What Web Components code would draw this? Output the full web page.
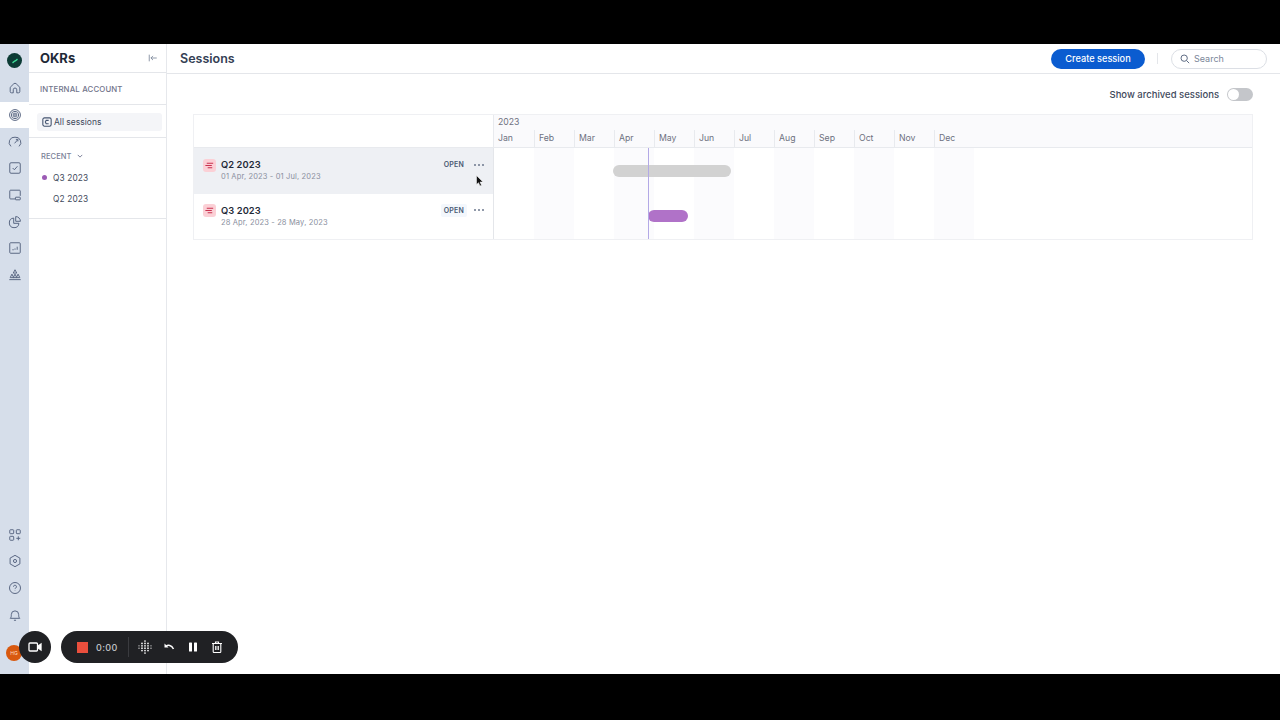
<!DOCTYPE html>
<html>
<head>
<meta charset="utf-8">
<title>OKRs</title>
<style>
html, body { margin: 0; height: 100%; background: #000; overflow: hidden; }
body { font-family: Inter, "Liberation Sans", sans-serif; color: #172b4d; }
okr-app { margin-top: 44px; }
</style>
</head>
<body>
<okr-app></okr-app>
<script>
const ICONS = {
    home: '<path d="M2.500 7.200 6.600 3.200a2 2 0 0 1 2.800 0l4.100 4V12a1.500 1.500 0 0 1-1.500 1.500H10V10a2 2 0 0 0-4 0v3.500H4A1.500 1.500 0 0 1 2.500 12z"/>',
    target: '<circle cx="8" cy="8" r="6.200"/><circle cx="8" cy="8" r="4.200"/><circle cx="8" cy="8" r="2.200"/><circle cx="8" cy="8" r=".6"/>',
    gauge: '<path d="M3.400 13A6 6 0 0 1 8 2.500a6 6 0 0 1 4.600 10.500"/><path d="M7.500 9.500 11 5.500"/><path d="M9 5h2.300v2.300"/>',
    check: '<rect x="2" y="2" width="12" height="12" rx="1.500"/><path d="m5.300 8 2 2 3.500-4"/>',
    screen: '<path d="M14 9V3.500a1 1 0 0 0-1-1H3a1 1 0 0 0-1 1v8a1 1 0 0 0 1 1h5"/><rect x="8.500" y="10.500" width="5.500" height="3" rx=".5"/>',
    pie: '<path d="M6.500 3.500a5.500 5.500 0 1 0 6 6h-6z"/><path d="M8.800 1.800a5.400 5.400 0 0 1 5.400 5.400H8.800z"/>',
    chart: '<rect x="2" y="2" width="12" height="12" rx="1"/><path d="M5 10h1.500M8 10V8.500M10.500 10V6.500"/>',
    tree: '<path d="M8 2 10 5.800H6z"/><path d="M4.500 7 6.500 11h-4z"/><path d="M11.500 7 13.500 11h-4z"/><path d="M8 7 10 11H6z"/><path d="M1.500 13.300h13"/>',
    apps: '<rect x="2" y="2" width="4.500" height="4.500" rx=".8"/><rect x="9.500" y="2" width="4.500" height="4.500" rx=".8"/><rect x="2" y="9.500" width="4.500" height="4.500" rx=".8"/><path d="M11.800 9.500v4.500M9.500 11.800h4.500"/>',
    gear: '<path d="M8 1.500l5.600 3.200v6.600L8 14.500l-5.600-3.200V4.700z" stroke-linejoin="round"/><circle cx="8" cy="8" r="1.800"/>',
    help: '<circle cx="8" cy="8" r="6.300"/><path d="M6.300 6.500a1.700 1.700 0 1 1 2.500 1.500c-.5.300-.8.600-.8 1.200"/><path d="M8 11v.4"/>',
    bell: '<path d="M2.500 11.800c1.200-1 1.300-2.200 1.300-4.300a4.200 4.200 0 0 1 8.400 0c0 2.100.1 3.300 1.300 4.300z"/><path d="M6.800 14h2.400"/>'
};

class OkrRail extends HTMLElement {
    constructor() {
        super();
        this.attachShadow({ mode: "open" });
        const item = (name, active) => `<div class="item ${active ? "active" : ""}"><svg viewBox="0 0 16 16" width="14" height="14">${ICONS[name]}</svg></div>`;
        this.shadowRoot.innerHTML = `
<style>
:host { display: flex; flex-direction: column; width: 29px; flex: none; background: #d6deea; box-sizing: border-box; padding-top: 9px; padding-bottom: 13px; }
.logo { width: 15px; height: 15px; border-radius: 50%; background: #0c3b35; margin: 0 0 7px 7px; display: flex; align-items: center; justify-content: center; }
.item { height: 26.700px; display: flex; align-items: center; justify-content: center; }
.item.active { background: #fff; }
svg { fill: none; stroke: #566480; stroke-width: 1.100; }
.grow { flex: 1; }
.avatar { width: 16px; height: 16px; border-radius: 50%; background: #d9590f; color: #ffd9c2; font-size: 5px; display: flex; align-items: center; justify-content: center; margin: 17px 0 0 6px; }
</style>
<div class="logo"><svg viewBox="0 0 16 16" width="10" height="10" style="stroke:#3ddc97;stroke-width:2.200"><path d="M4 11 7 8.500 9 7.500 12 5"/></svg></div>
${item("home")}${item("target", true)}${item("gauge")}${item("check")}${item("screen")}${item("pie")}${item("chart")}${item("tree")}
<div class="grow"></div>
${item("apps")}${item("gear")}${item("help")}${item("bell")}
<div class="avatar">HG</div>`;
    }
}

class OkrSidebar extends HTMLElement {
    constructor() {
        super();
        this.attachShadow({ mode: "open" });
        this.shadowRoot.innerHTML = `
<style>
:host { display: flex; flex-direction: column; width: 138px; flex: none; background: #fff; border-right: 1px solid #e6e8ec; box-sizing: border-box; }
.title { height: 29px; box-sizing: border-box; border-bottom: 1px solid #e4e6ea; display: flex; align-items: center; justify-content: space-between; padding: 0 8px 0 11px; font-size: 13px; font-weight: 700; color: #1f2937; }
.title svg { fill: none; stroke: #7a8699; stroke-width: 1; }
.account { height: 32px; box-sizing: border-box; border-bottom: 1px solid #e4e6ea; display: flex; align-items: center; padding: 1px 0 0 11px; font-size: 7.800px; font-weight: 500; letter-spacing: .15px; color: #71748a; }
.all { height: 33px; box-sizing: border-box; border-bottom: 1px solid #e4e6ea; padding: 8px 4px 7px 8px; }
.all div { height: 18px; background: #f4f5f8; border-radius: 3px; display: flex; align-items: center; gap: 2px; padding-left: 5px; font-size: 8.500px; color: #3f4a5c; }
.all svg { fill: none; stroke: #44546f; stroke-width: 1.300; }
.recent { height: 81px; box-sizing: border-box; border-bottom: 1px solid #e4e6ea; padding: 13px 0 0 12px; }
.head { font-size: 7.500px; font-weight: 500; color: #7a7f98; display: flex; align-items: center; gap: 5px; height: 10px; margin-bottom: 6px; letter-spacing: .1px; }
.head svg { fill: none; stroke: #7a7f98; stroke-width: 1.300; }
.link { height: 21.500px; display: flex; align-items: center; font-size: 8.300px; color: #3f4a5c; letter-spacing: .15px; padding-left: 12px; position: relative; }
.dot { position: absolute; left: 1px; top: 8px; width: 5px; height: 5px; border-radius: 50%; background: #9c5bb5; }
</style>
<div class="title"><span>OKRs</span><svg viewBox="0 0 12 12" width="10" height="10"><path d="M1.500 2v8M10.500 6H3.500M6 3.500 3.500 6 6 8.500"/></svg></div>
<div class="account">INTERNAL ACCOUNT</div>
<div class="all"><div><svg viewBox="0 0 12 12" width="10" height="10"><rect x="1" y="1" width="10" height="10" rx="2"/><path d="M8 4H5L4 6l1 2h3"/></svg>All sessions</div></div>
<div class="recent">
<div class="head">RECENT<svg viewBox="0 0 8 8" width="6" height="6"><path d="m1 2.500 3 3 3-3"/></svg></div>
<div class="link"><span class="dot"></span>Q3 2023</div>
<div class="link">Q2 2023</div>
</div>`;
    }
}

class OkrHeader extends HTMLElement {
    constructor() {
        super();
        this.attachShadow({ mode: "open" });
        this.shadowRoot.innerHTML = `
<style>
:host { display: flex; align-items: center; height: 30px; box-sizing: border-box; border-bottom: 1px solid #e4e6ea; padding: 0 13px; background: #fff; }
h1 { margin: 0; flex: 1; font-size: 12.500px; font-weight: 600; color: #344054; }
button { width: 94px; height: 20px; border: 0; border-radius: 10px; background: #0b5cd0; color: #fff; font: 500 9.200px Inter, sans-serif; padding: 0; }
.sep { width: 1px; height: 11px; background: #e4e6ea; margin: 0 13px 0 12px; }
.search { width: 96px; height: 20px; box-sizing: border-box; border: 1px solid #dcdfe5; border-radius: 10px; display: flex; align-items: center; gap: 4px; padding-left: 8px; font-size: 9px; color: #7a8699; }
svg { fill: none; stroke: #5e6c84; stroke-width: 1.200; }
</style>
<h1>Sessions</h1>
<button>Create session</button>
<span class="sep"></span>
<div class="search"><svg viewBox="0 0 12 12" width="10" height="10"><circle cx="5" cy="5" r="3.800"/><path d="m8 8 3 3"/></svg>Search</div>`;
    }
}

class ArchiveToggle extends HTMLElement {
    constructor() {
        super();
        this.attachShadow({ mode: "open" });
        this.shadowRoot.innerHTML = `
<style>
:host { display: flex; justify-content: flex-end; align-items: center; gap: 8px; height: 13px; font-size: 9.500px; font-weight: 500; color: #3f4a5c; }
.track { width: 26px; height: 13px; border-radius: 7px; background: #c4c6ca; position: relative; }
.knob { position: absolute; left: 1px; top: 1px; width: 11px; height: 11px; border-radius: 50%; background: #fff; }
</style>
<span>Show archived sessions</span>
<div class="track"><div class="knob"></div></div>`;
    }
}

class GanttRow extends HTMLElement {
    static get observedAttributes() { return ["name", "dates"]; }
    constructor() {
        super();
        this.attachShadow({ mode: "open" });
        this.shadowRoot.innerHTML = `
<style>
:host { display: flex; align-items: center; height: 45.500px; box-sizing: border-box; padding: 0 8px 0 9px; gap: 5px; background: #fff; }
:host([hover]) { background: #eef0f4; }
.icon { width: 13px; height: 13px; border-radius: 3px; background: #fbd0d6; display: flex; align-items: center; justify-content: center; margin-top: -11px; }
svg { fill: none; stroke: #c9304f; stroke-width: 1.200; }
.text { flex: 1; }
.name { font-size: 9.300px; font-weight: 600; color: #1f2937; letter-spacing: .1px; line-height: 12px; }
.dates { font-size: 7.500px; color: #8a8f9e; letter-spacing: .15px; line-height: 11px; }
.status { font-size: 7px; font-weight: 600; color: #4a5a72; letter-spacing: .2px; background: #f3f7fc; padding: 2px 3px; border-radius: 2px; margin-top: -12px; }
:host([hover]) .status { background: transparent; }
.more { margin: -12px 0 0 2px; display: flex; gap: 2px; width: 11px; }
.more i { flex: none; width: 2px; height: 2px; border-radius: 50%; background: #6b778c; }
</style>
<div class="icon"><svg viewBox="0 0 12 12" width="11" height="11"><path d="M3 3.500h7M1.500 6h7M4 8.500h5"/></svg></div>
<div class="text"><div class="name" id="name"></div><div class="dates" id="dates"></div></div>
<span class="status">OPEN</span>
<div class="more"><i></i><i></i><i></i></div>`;
    }
    attributeChangedCallback(name, oldValue, newValue) {
        this.shadowRoot.getElementById(name).textContent = newValue;
    }
}

class GanttChart extends HTMLElement {
    constructor() {
        super();
        this.attachShadow({ mode: "open" });
        const months = ["Jan", "Feb", "Mar", "Apr", "May", "Jun", "Jul", "Aug", "Sep", "Oct", "Nov", "Dec"];
        this.shadowRoot.innerHTML = `
<style>
:host { display: grid; grid-template-columns: 300px 1fr; grid-template-rows: 33px 91px; border: 1px solid #eff0f3; background: #fff; }
.corner { border-bottom: 1px solid #e8eaee; border-right: 1px solid #e8eaee; }
.head { background: #fafafc; border-bottom: 1px solid #e8eaee; display: flex; flex-direction: column; font-size: 8.700px; color: #6e7180; }
.year { height: 15px; padding: 1px 0 0 4px; box-sizing: border-box; line-height: 12px; }
.months { display: flex; flex: 1; }
.months span { width: 40px; box-sizing: border-box; border-left: 1px solid #e8eaee; padding: 3px 0 0 4px; }
.months span:first-child { border-left: 0; }
.rows { border-right: 1px solid #e4e6ea; }
.chart { position: relative; display: flex; }
.chart i { width: 40px; }
.chart i:nth-child(even) { background: #fbfbfd; }
.bar { position: absolute; height: 12px; border-radius: 6px; }
.today { position: absolute; left: 154px; top: 0; bottom: 0; width: 1px; background: #b3a9e6; }
</style>
<div class="corner"></div>
<div class="head">
<div class="year">2023</div>
<div class="months">${months.map(m => `<span>${m}</span>`).join("")}</div>
</div>
<div class="rows"><slot></slot></div>
<div class="chart">
${months.map(() => "<i></i>").join("")}
<div class="bar" style="left:119px;top:17px;width:118px;background:#d2d2d2"></div>
<div class="bar" style="left:154px;top:62px;width:40px;background:#b072c8"></div>
<div class="today"></div>
</div>`;
    }
}

class RecToolbar extends HTMLElement {
    constructor() {
        super();
        this.attachShadow({ mode: "open" });
        // dots of the grid tool, a diamond of rows 1-3-5-5-3-1
        const rows = [1, 3, 5, 5, 3, 1];
        const dots = rows.map((n, r) => Array.from({ length: n }, (_, c) =>
            `<circle cx="${7 + (c - (n - 1) / 2) * 3}" cy="${1 + r * 2.400}" r="${n === 5 && (c === 0 || c === 4) ? .6 : .85}"/>`).join("")).join("");
        this.shadowRoot.innerHTML = `
<style>
:host { position: absolute; left: 19px; top: 587px; display: flex; gap: 10.500px; color: #fff; }
.cam { width: 31.500px; height: 32px; border-radius: 50%; background: #202124; display: flex; align-items: center; justify-content: center; }
.bar { width: 177px; height: 32px; border-radius: 16px; background: #202124; display: flex; align-items: center; box-sizing: border-box; padding-left: 16px; }
.stop { width: 11px; height: 11px; background: #ea4f3d; }
.time { font-size: 9px; font-weight: 500; color: #c4c6ca; letter-spacing: .4px; margin-left: 8px; width: 22px; }
.sep { width: 1px; height: 20px; background: #3a3b3f; margin: 0 4px 0 10px; }
.tool { width: 24px; display: flex; justify-content: center; }
svg { display: block; }
</style>
<div class="cam"><svg viewBox="0 0 14 12" width="14" height="12" fill="none" stroke="#fff" stroke-width="1.300"><rect x="1" y="2" width="8.500" height="8" rx="1"/><path d="M9.500 5.500 13 3v6L9.500 6.500" fill="#fff"/></svg></div>
<div class="bar">
<span class="stop"></span><span class="time">0:00</span><span class="sep"></span>
<div class="tool"><svg viewBox="0 0 14 14" width="14" height="14" fill="#fff">${dots}</svg></div>
<div class="tool"><svg viewBox="0 0 12 12" width="12" height="12" fill="none" stroke="#fff" stroke-width="1.500"><path d="M3 5.500C5 3.500 8.500 4 10.500 8"/><path d="M1.500 2.500v4h4z" fill="#fff" stroke="none"/></svg></div>
<div class="tool"><svg viewBox="0 0 12 12" width="12" height="12" fill="#fff"><rect x="2" y="1.500" width="3" height="9" rx=".6"/><rect x="7" y="1.500" width="3" height="9" rx=".6"/></svg></div>
<div class="tool"><svg viewBox="0 0 12 12" width="12" height="12" fill="none" stroke="#fff" stroke-width="1.100"><path d="M1 2.500h10M4.500 2.500V1h3v1.500"/><rect x="2.200" y="2.500" width="7.600" height="9" rx=".8"/><path d="M4.800 5v4M7.200 5v4" stroke-width="1.300"/></svg></div>
</div>`;
    }
}

class OkrApp extends HTMLElement {
    constructor() {
        super();
        this.attachShadow({ mode: "open" });
        this.shadowRoot.innerHTML = `
<style>
:host { display: flex; height: 630px; background: #fff; position: relative; overflow: hidden; }
main { flex: 1; min-width: 0; display: flex; flex-direction: column; }
.content { padding: 14px 27px 0 26px; display: flex; flex-direction: column; gap: 13px; }
.cursor { position: absolute; left: 476px; top: 131px; }
</style>
<okr-rail></okr-rail>
<okr-sidebar></okr-sidebar>
<main>
<okr-header></okr-header>
<div class="content">
<archive-toggle></archive-toggle>
<gantt-chart>
<gantt-row hover name="Q2 2023" dates="01 Apr, 2023 - 01 Jul, 2023"></gantt-row>
<gantt-row name="Q3 2023" dates="28 Apr, 2023 - 28 May, 2023"></gantt-row>
</gantt-chart>
</div>
</main>
<svg class="cursor" viewBox="0 0 8 12" width="8" height="12"><path d="M.5.5v9l2-1.800L4 11l1.500-.8L4 7h3z" fill="#111" stroke="#fff" stroke-width=".5"/></svg>
<rec-toolbar></rec-toolbar>`;
    }
}

customElements.define("okr-rail", OkrRail);
customElements.define("okr-sidebar", OkrSidebar);
customElements.define("okr-header", OkrHeader);
customElements.define("archive-toggle", ArchiveToggle);
customElements.define("gantt-row", GanttRow);
customElements.define("gantt-chart", GanttChart);
customElements.define("rec-toolbar", RecToolbar);
customElements.define("okr-app", OkrApp);
</script>
</body>
</html>
